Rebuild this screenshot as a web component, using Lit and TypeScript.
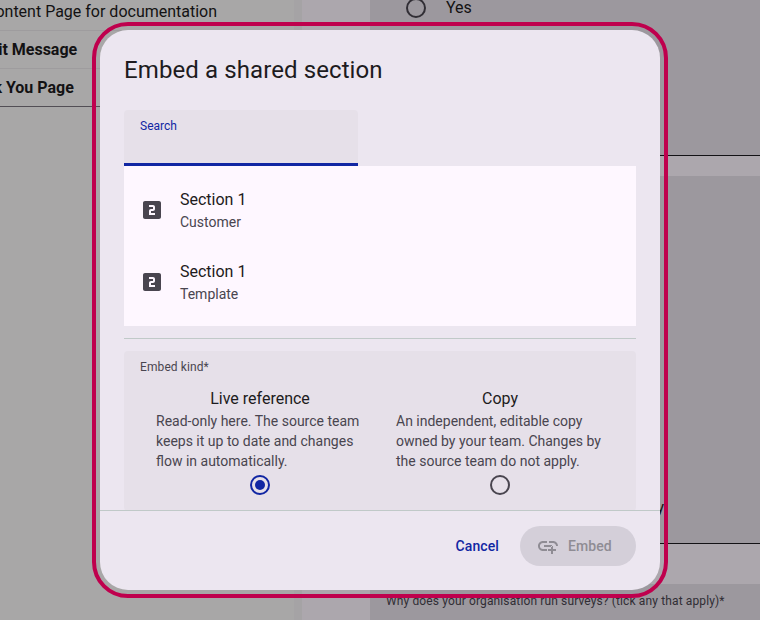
import { LitElement, html, css, svg } from "lit";
import { customElement } from "lit/decorators.js";

const looksTwo = svg`<path d="M19 3H5c-1.1 0-2 .9-2 2v14c0 1.1.9 2 2 2h14c1.1 0 2-.9 2-2V5c0-1.1-.9-2-2-2zm-4 8c0 1.11-.9 2-2 2h-2v2h4v2H9v-4c0-1.11.9-2 2-2h2V9H9V7h4c1.1 0 2 .89 2 2v2z"/>`;
const addLink = svg`<path d="M8 11h8v2H8zm12.1 1H22c0-2.76-2.24-5-5-5h-4v1.9h4c1.71 0 3.1 1.39 3.1 3.1zM3.9 12c0-1.71 1.39-3.1 3.1-3.1h4V7H7c-2.76 0-5 2.24-5 5s2.24 5 5 5h4v-1.9H7c-1.71 0-3.1-1.39-3.1-3.1zM17 12h-2v3h-3v2h3v3h2v-3h3v-2h-3z"/>`;

@customElement("app-root")
export class AppRoot extends LitElement {
  static styles = css`
    :host {
      display: block;
      position: relative;
      width: 760px;
      height: 620px;
      overflow: hidden;
      font-family: Roboto, sans-serif;
      color: #1d1b20;
    }
    .page {
      display: grid;
      grid-template-columns: 294px 8px 68px 390px;
      height: 620px;
    }
    .nav { background: #f8f7f7; overflow: hidden; }
    .gutter { background: #f3f0f3; }
    .mid { background: #fef7ff; }
    .main { background: #e6e0e9; display: flex; flex-direction: column; overflow: hidden; }
    .nav-list { display: flex; flex-direction: column; width: 294px; }
    .nav-row {
      box-sizing: border-box;
      height: 38px;
      display: flex;
      align-items: center;
      font-size: 16px;
      white-space: nowrap;
      border-bottom: 1px solid #e9e6e9;
    }
    .nav-row.first { height: 31px; padding-bottom: 7px; margin-left: -15px; }
    .nav-row.b { font-weight: 700; }
    .nav-row.m1 { margin-left: -19px; }
    .nav-row.m2 { margin-left: -43px; }
    .nav-row.last { border-bottom-color: #79747e; }
    .yes {
      display: flex;
      align-items: center;
      gap: 20px;
      height: 16px;
      padding-left: 36px;
      font-size: 16px;
    }
    .yes-label { margin-bottom: 2px; }
    .band { background: #fef7ff; flex: none; }
    .main-top { height: 155px; border-bottom: 1px solid #1d1b20; flex: none; }
    .band.a { height: 20px; }
    .main-mid { height: 367px; flex: none; border-bottom: 1px solid #1d1b20; }
    .y-text {
      display: flex;
      justify-content: flex-end;
      padding-top: 322px;
      padding-right: 96px;
      font-size: 16px;
      line-height: 20px;
    }
    .band.b { height: 40px; }
    .q { padding: 7px 0 0 16px; font-size: 12px; letter-spacing: 0.13px; line-height: 20px; white-space: nowrap; color: #49454f; }
    .scrim { position: absolute; inset: 0; background: rgba(0, 0, 0, 0.32); }

    .dialog {
      position: absolute;
      left: 100px;
      top: 30px;
      width: 560px;
      height: 560px;
      box-sizing: border-box;
      background: #ece6f0;
      border-radius: 28px;
      outline: 4px solid #bf004d;
      outline-offset: 4px;
      display: flex;
      flex-direction: column;
      overflow: hidden;
    }
    .title {
      margin: 0;
      padding: 24px 24px 0;
      height: 56px;
      box-sizing: border-box;
      font-size: 24px;
      font-weight: 400;
      line-height: 32px;
      letter-spacing: 0.1px;
      flex: none;
    }
    .body {
      flex: 1;
      min-height: 0;
      overflow: hidden;
      padding: 24px 24px 0;
      display: flex;
      flex-direction: column;
    }
    .search {
      box-sizing: border-box;
      width: 234px;
      height: 56px;
      flex: none;
      background: #e6e0e9;
      border-radius: 4px 4px 0 0;
      border-bottom: 3px solid #1126a3;
      padding: 8px 16px 0;
      font-size: 12px;
      line-height: 16px;
      color: #1126a3;
    }
    .list {
      background: #fef7ff;
      padding: 8px 0;
      flex: none;
    }
    .item {
      height: 72px;
      display: flex;
      align-items: center;
      padding-left: 16px;
      gap: 16px;
    }
    .item svg { width: 24px; height: 24px; fill: #49454f; flex: none; }
    .item-title { font-size: 16px; line-height: 24px; }
    .item-sub { font-size: 14px; line-height: 20px; color: #49454f; }
    .divider { height: 1px; background: #c0c9c8; margin-top: 12px; flex: none; }
    .kind {
      margin-top: 12px;
      background: #e6e0e9;
      border-radius: 4px;
      padding: 8px 16px 16px;
      flex: none;
    }
    .kind-label { font-size: 12px; line-height: 16px; letter-spacing: 0.1px; color: #49454f; }
    .options { display: grid; grid-template-columns: 240px 240px; margin-top: 12px; }
    .option { display: flex; flex-direction: column; align-items: center; }
    .option-title { font-size: 16px; line-height: 24px; }
    .option-desc {
      box-sizing: border-box;
      width: 100%;
      padding-left: 16px;
      font-size: 14px;
      line-height: 20px;
      color: #49454f;
    }
    .radio {
      box-sizing: border-box;
      display: block;
      width: 20px;
      height: 20px;
      border: 2px solid #49454f;
      border-radius: 50%;
      flex: none;
    }
    .option .radio { margin-top: 4px; }
    .radio.on { border-color: #1126a3; position: relative; }
    .radio.on::after {
      content: "";
      position: absolute;
      inset: 3px;
      border-radius: 50%;
      background: #1126a3;
    }
    .footer {
      flex: none;
      height: 80px;
      box-sizing: border-box;
      border-top: 1px solid #c0c9c8;
      padding: 15px 24px 0;
      display: flex;
      justify-content: flex-end;
      align-items: flex-start;
      gap: 8px;
    }
    .btn {
      height: 40px;
      border: 0;
      background: none;
      font: 500 14px/20px Roboto, sans-serif;
      letter-spacing: 0.1px;
      border-radius: 20px;
      display: flex;
      align-items: center;
      padding: 0;
    }
    .cancel { color: #1126a3; padding: 0 13px 0 12px; }
    .embed {
      width: 116px;
      background: #d4cfd9;
      color: #8f8c94;
      padding-left: 16px;
      gap: 8px;
      box-sizing: border-box;
    }
    .embed svg { width: 24px; height: 24px; fill: #8f8c94; flex: none; }
  `;

  private item(title: string, sub: string) {
    return html`<div class="item">
      <svg viewBox="0 0 24 24">${looksTwo}</svg>
      <div>
        <div class="item-title">${title}</div>
        <div class="item-sub">${sub}</div>
      </div>
    </div>`;
  }

  private option(title: string, desc: string, on: boolean) {
    return html`<div class="option">
      <div class="option-title">${title}</div>
      <div class="option-desc">${desc}</div>
      <span class="radio ${on ? "on" : ""}"></span>
    </div>`;
  }

  render() {
    return html`
      <div class="page">
        <div class="nav">
          <div class="nav-list">
            <div class="nav-row first">Content Page for documentation</div>
            <div class="nav-row b m1">Exit Message</div>
            <div class="nav-row b m2 last">Thank You Page</div>
          </div>
        </div>
        <div class="gutter"></div>
        <div class="mid"></div>
        <div class="main">
          <div class="main-top">
            <div class="yes"><span class="radio"></span><span class="yes-label">Yes</span></div>
          </div>
          <div class="band a"></div>
          <div class="main-mid"><div class="y-text">y</div></div>
          <div class="band b"></div>
          <div class="q">Why does your organisation run surveys? (tick any that apply)*</div>
        </div>
      </div>
      <div class="scrim"></div>
      <div class="dialog" role="dialog">
        <h2 class="title">Embed a shared section</h2>
        <div class="body">
          <div class="search">Search</div>
          <div class="list">
            ${this.item("Section 1", "Customer")}
            ${this.item("Section 1", "Template")}
          </div>
          <div class="divider"></div>
          <div class="kind">
            <div class="kind-label">Embed kind*</div>
            <div class="options">
              ${this.option("Live reference", "Read-only here. The source team keeps it up to date and changes flow in automatically.", true)}
              ${this.option("Copy", "An independent, editable copy owned by your team. Changes by the source team do not apply.", false)}
            </div>
          </div>
        </div>
        <div class="footer">
          <button class="btn cancel">Cancel</button>
          <button class="btn embed" disabled><svg viewBox="0 0 24 24">${addLink}</svg>Embed</button>
        </div>
      </div>
    `;
  }
}
